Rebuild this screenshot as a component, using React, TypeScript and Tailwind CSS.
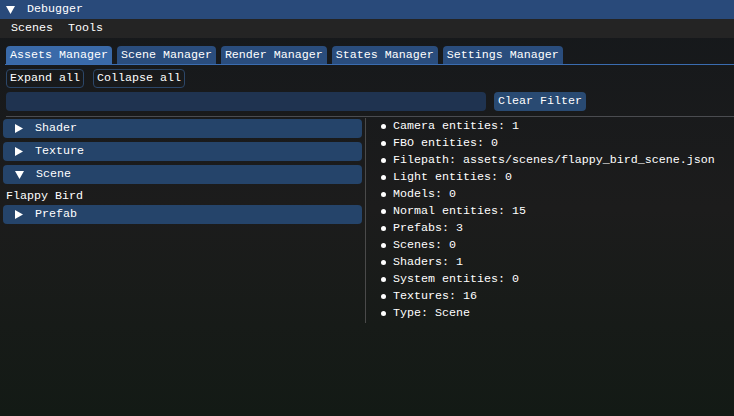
import React from "react";

const tabs = [
  "Assets Manager",
  "Scene Manager",
  "Render Manager",
  "States Manager",
  "Settings Manager",
];

const stats = [
  "Camera entities: 1",
  "FBO entities: 0",
  "Filepath: assets/scenes/flappy_bird_scene.json",
  "Light entities: 0",
  "Models: 0",
  "Normal entities: 15",
  "Prefabs: 3",
  "Scenes: 0",
  "Shaders: 1",
  "System entities: 0",
  "Textures: 16",
  "Type: Scene",
];

function Arrow({ open }: { open?: boolean }) {
  return open ? (
    <svg width="9" height="8" viewBox="0 0 9 8" className="shrink-0">
      <polygon points="0,0 9,0 4.5,8" fill="#ffffff" />
    </svg>
  ) : (
    <svg width="8" height="9" viewBox="0 0 8 9" className="shrink-0">
      <polygon points="0,0 8,4.5 0,9" fill="#ffffff" />
    </svg>
  );
}

function Header({ label, open }: { label: string; open?: boolean }) {
  return (
    <div className="h-[19px] rounded-[4px] bg-[#25446a] flex items-center pl-[12px] gap-[12px]">
      <Arrow open={open} />
      <span>{label}</span>
    </div>
  );
}

export default function App() {
  return (
    <div
      className="w-[734px] h-[416px] overflow-hidden flex flex-col text-white text-[11.67px] leading-[13px] bg-gradient-to-b from-[#15181b] via-[#1c1c1c] to-[#131a15]"
      style={{ fontFamily: '"Liberation Mono", "DejaVu Sans Mono", monospace' }}
    >
      {/* title bar */}
      <div className="h-[19px] bg-[#294a7a] flex items-center pl-[6px] gap-[12px]">
        <Arrow open />
        <span>Debugger</span>
      </div>

      {/* menu bar */}
      <div className="h-[19px] bg-[#242424] flex items-center pl-[4px]">
        <span className="px-[7px]">Scenes</span>
        <span className="px-[8px]">Tools</span>
      </div>

      {/* tabs */}
      <div className="mt-[8px] pl-[5px] flex flex-col">
        <div className="flex gap-[5px] pl-[1px]">
          {tabs.map((t, i) => (
            <div
              key={t}
              className={
                "h-[18px] px-[4px] rounded-t-[4px] flex items-center " +
                (i === 0 ? "bg-[#3a6aa9]" : "bg-[#2a4d7d]")
              }
            >
              {t}
            </div>
          ))}
        </div>
        <div className="h-[1px] bg-[#3a6cb0]" />
      </div>

      <div className="pl-[6px] flex flex-col">
        <div className="mt-[4px] flex gap-[9px]">
          <div className="h-[19px] px-[3px] rounded-[4px] border border-[#2c4769] flex items-center">
            Expand all
          </div>
          <div className="h-[19px] px-[3px] rounded-[4px] border border-[#2c4769] flex items-center">
            Collapse all
          </div>
        </div>
        <div className="mt-[4px] flex gap-[8px]">
          <div className="h-[19px] w-[480px] rounded-[4px] bg-[#1f3350]" />
          <div className="h-[19px] px-[4px] rounded-[4px] bg-[#294a72] flex items-center">
            Clear Filter
          </div>
        </div>
        <div className="mt-[5px] h-[1px] bg-[#4a4c50]" />
      </div>

      {/* columns */}
      <div className="mt-[1px] flex">
        <div className="w-[362px] pl-[3px] pt-[1px] flex flex-col gap-[4px]">
          <Header label="Shader" />
          <Header label="Texture" />
          <Header label="Scene" open />
          <div className="h-[13px] pl-[3px] flex items-center">
            <span className="translate-y-[2px]">Flappy Bird</span>
          </div>
          <Header label="Prefab" />
        </div>
        <div className="ml-[3px] w-[1px] h-[205px] bg-[#4a4a4a]" />
        <div className="pl-[15px] flex flex-col">
          {stats.map((s) => (
            <div key={s} className="h-[17px] flex items-center gap-[7px]">
              <span className="w-[5px] h-[5px] rounded-full bg-white shrink-0" />
              <span>{s}</span>
            </div>
          ))}
        </div>
      </div>
    </div>
  );
}
